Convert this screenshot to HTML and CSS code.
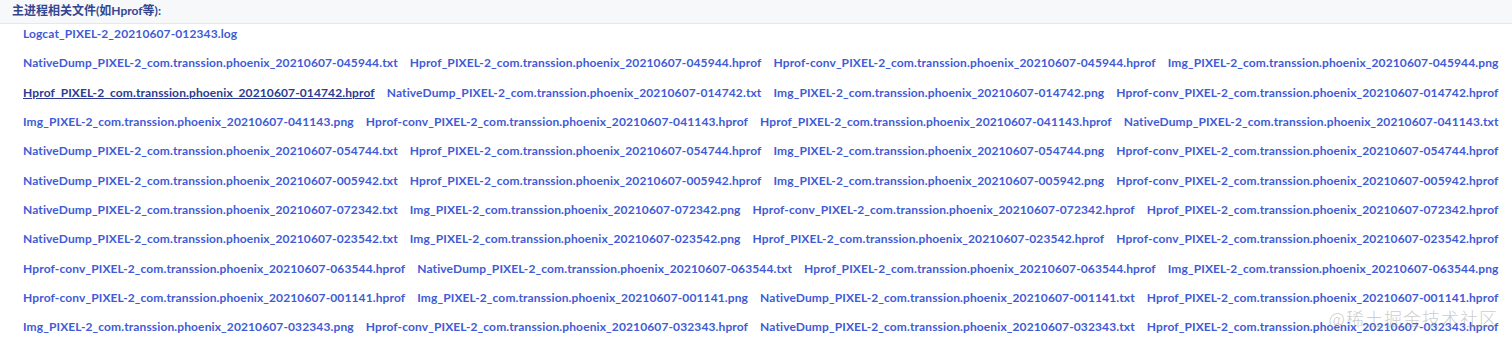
FILE: index.html
```html
<!DOCTYPE html>
<html lang="zh-CN">
<head>
  <meta charset="UTF-8" />
  <meta name="viewport" content="width=device-width, initial-scale=1" />
  <title>主进程相关文件</title>
  <link rel="stylesheet" href="styles.css">
</head>
<body>

  <div class="section-title">主进程相关文件(如Hprof等):</div>

  <div class="file-list">
    <div class="file-row">
      <a href="#">Logcat_PIXEL-2_20210607-012343.log</a>
    </div>
    <div class="file-row">
      <a href="#">NativeDump_PIXEL-2_com.transsion.phoenix_20210607-045944.txt</a>
      <a href="#">Hprof_PIXEL-2_com.transsion.phoenix_20210607-045944.hprof</a>
      <a href="#">Hprof-conv_PIXEL-2_com.transsion.phoenix_20210607-045944.hprof</a>
      <a href="#">Img_PIXEL-2_com.transsion.phoenix_20210607-045944.png</a>
    </div>
    <div class="file-row">
      <a href="#" class="hover">Hprof_PIXEL-2_com.transsion.phoenix_20210607-014742.hprof</a>
      <a href="#">NativeDump_PIXEL-2_com.transsion.phoenix_20210607-014742.txt</a>
      <a href="#">Img_PIXEL-2_com.transsion.phoenix_20210607-014742.png</a>
      <a href="#">Hprof-conv_PIXEL-2_com.transsion.phoenix_20210607-014742.hprof</a>
    </div>
    <div class="file-row">
      <a href="#">Img_PIXEL-2_com.transsion.phoenix_20210607-041143.png</a>
      <a href="#">Hprof-conv_PIXEL-2_com.transsion.phoenix_20210607-041143.hprof</a>
      <a href="#">Hprof_PIXEL-2_com.transsion.phoenix_20210607-041143.hprof</a>
      <a href="#">NativeDump_PIXEL-2_com.transsion.phoenix_20210607-041143.txt</a>
    </div>
    <div class="file-row">
      <a href="#">NativeDump_PIXEL-2_com.transsion.phoenix_20210607-054744.txt</a>
      <a href="#">Hprof_PIXEL-2_com.transsion.phoenix_20210607-054744.hprof</a>
      <a href="#">Img_PIXEL-2_com.transsion.phoenix_20210607-054744.png</a>
      <a href="#">Hprof-conv_PIXEL-2_com.transsion.phoenix_20210607-054744.hprof</a>
    </div>
    <div class="file-row">
      <a href="#">NativeDump_PIXEL-2_com.transsion.phoenix_20210607-005942.txt</a>
      <a href="#">Hprof_PIXEL-2_com.transsion.phoenix_20210607-005942.hprof</a>
      <a href="#">Img_PIXEL-2_com.transsion.phoenix_20210607-005942.png</a>
      <a href="#">Hprof-conv_PIXEL-2_com.transsion.phoenix_20210607-005942.hprof</a>
    </div>
    <div class="file-row">
      <a href="#">NativeDump_PIXEL-2_com.transsion.phoenix_20210607-072342.txt</a>
      <a href="#">Img_PIXEL-2_com.transsion.phoenix_20210607-072342.png</a>
      <a href="#">Hprof-conv_PIXEL-2_com.transsion.phoenix_20210607-072342.hprof</a>
      <a href="#">Hprof_PIXEL-2_com.transsion.phoenix_20210607-072342.hprof</a>
    </div>
    <div class="file-row">
      <a href="#">NativeDump_PIXEL-2_com.transsion.phoenix_20210607-023542.txt</a>
      <a href="#">Img_PIXEL-2_com.transsion.phoenix_20210607-023542.png</a>
      <a href="#">Hprof_PIXEL-2_com.transsion.phoenix_20210607-023542.hprof</a>
      <a href="#">Hprof-conv_PIXEL-2_com.transsion.phoenix_20210607-023542.hprof</a>
    </div>
    <div class="file-row">
      <a href="#">Hprof-conv_PIXEL-2_com.transsion.phoenix_20210607-063544.hprof</a>
      <a href="#">NativeDump_PIXEL-2_com.transsion.phoenix_20210607-063544.txt</a>
      <a href="#">Hprof_PIXEL-2_com.transsion.phoenix_20210607-063544.hprof</a>
      <a href="#">Img_PIXEL-2_com.transsion.phoenix_20210607-063544.png</a>
    </div>
    <div class="file-row">
      <a href="#">Hprof-conv_PIXEL-2_com.transsion.phoenix_20210607-001141.hprof</a>
      <a href="#">Img_PIXEL-2_com.transsion.phoenix_20210607-001141.png</a>
      <a href="#">NativeDump_PIXEL-2_com.transsion.phoenix_20210607-001141.txt</a>
      <a href="#">Hprof_PIXEL-2_com.transsion.phoenix_20210607-001141.hprof</a>
    </div>
    <div class="file-row">
      <a href="#">Img_PIXEL-2_com.transsion.phoenix_20210607-032343.png</a>
      <a href="#">Hprof-conv_PIXEL-2_com.transsion.phoenix_20210607-032343.hprof</a>
      <a href="#">NativeDump_PIXEL-2_com.transsion.phoenix_20210607-032343.txt</a>
      <a href="#">Hprof_PIXEL-2_com.transsion.phoenix_20210607-032343.hprof</a>
    </div>
  </div>

  <div class="watermark">@稀土掘金技术社区</div>

</body>
</html>
```
FILE: styles.css
```css
body {
  margin: 0;
  background: #fff;
  font-family: Lato, "Noto Sans CJK SC", sans-serif;
  position: relative;
  height: 340px;
  overflow: hidden;
}
.section-title {
  height: 23px;
  line-height: 21px;
  padding-left: 12px;
  background: #f7f8fa;
  border-bottom: 1px solid #e6e8ee;
  color: #34468f;
  font-size: 12px;
  font-weight: 700;
}
.file-list {
  display: flex;
  flex-direction: column;
  gap: 12.35px;
  padding: 1px 0 0 23px;
}
.file-row {
  display: flex;
  gap: 12px;
  line-height: 17px;
  white-space: nowrap;
}
.file-row a {
  color: #3f5bd6;
  font-size: 12px;
  font-weight: 700;
  letter-spacing: 0.12px;
  text-decoration: none;
}
.file-row a.hover {
  color: #2c3b91;
  text-decoration: underline;
}
.watermark {
  position: absolute;
  right: 14px;
  bottom: 9px;
  font-family: "Noto Sans CJK SC", sans-serif;
  font-size: 18px;
  font-weight: 300;
  color: rgba(160, 160, 160, 0.55);
  letter-spacing: 1px;
}
```
